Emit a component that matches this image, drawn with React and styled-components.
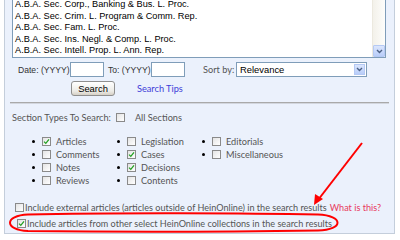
import React from "react";
import styled, { createGlobalStyle } from "styled-components";

const GlobalStyle = createGlobalStyle`
  html, body {
    margin: 0;
    padding: 0;
    background: #fff;
  }
`;

const journals = [
  "A.B.A. Sec. Comm. L. Program & Rep.",
  "A.B.A. Sec. Corp., Banking & Bus. L. Proc.",
  "A.B.A. Sec. Crim. L. Program & Comm. Rep.",
  "A.B.A. Sec. Fam. L. Proc.",
  "A.B.A. Sec. Ins. Negl. & Comp. L. Proc.",
  "A.B.A. Sec. Intell. Prop. L. Ann. Rep.",
];

const columns = [
  [
    { label: "Articles", checked: true },
    { label: "Comments" },
    { label: "Notes" },
    { label: "Reviews" },
  ],
  [
    { label: "Legislation" },
    { label: "Cases", checked: true },
    { label: "Decisions", checked: true },
    { label: "Contents" },
  ],
  [{ label: "Editorials" }, { label: "Miscellaneous" }],
];

const Check = ({ checked }) => (
  <Box>
    {checked && (
      <svg width="7" height="7" viewBox="0 0 7 7">
        <path d="M1 3.6 L2.8 5.4 L6 1.4" fill="none" stroke="#22a022" strokeWidth="1.3" />
      </svg>
    )}
  </Box>
);

const Chevron = () => (
  <svg width="7" height="5" viewBox="0 0 7 5">
    <path d="M1 1 L3.5 3.5 L6 1" fill="none" stroke="#4d6185" strokeWidth="1.4" />
  </svg>
);

const App = () => {
  return (
    <Page>
      <GlobalStyle />
      <Panel>
        <ListBox>
          <Rows>
            {journals.map((j) => (
              <Row key={j}>{j}</Row>
            ))}
          </Rows>
          <Scrollbar>
            <ScrollButton>
              <Chevron />
            </ScrollButton>
          </Scrollbar>
        </ListBox>

        <FormRow $top={4}>
          <FieldLabel $w={52}>Date: (YYYY)</FieldLabel>
          <TextInput />
          <FieldLabel $w={47} $pad={4}>To: (YYYY)</FieldLabel>
          <TextInput />
          <FieldLabel $w={51} $pad={18} $sans>
            Sort by:
          </FieldLabel>
          <Select>
            <span>Relevance</span>
            <SelectButton>
              <Chevron />
            </SelectButton>
          </Select>
        </FormRow>

        <FormRow $top={4}>
          <Button>Search</Button>
          <TipsLink>Search Tips</TipsLink>
        </FormRow>

        <Divider />

        <SectionRow>
          <span>Section Types To Search:</span>
          <Check />
          <span>All Sections</span>
        </SectionRow>

        <Columns>
          {columns.map((col, i) => (
            <Column key={i}>
              {col.map((item) => (
                <Item key={item.label}>
                  <Bullet />
                  <Check checked={item.checked} />
                  <span>{item.label}</span>
                </Item>
              ))}
            </Column>
          ))}
        </Columns>

        <IncludeRow $top={14} $left={10}>
          <Check />
          <span>
            Include external articles (articles outside of HeinOnline) in the search results
          </span>
          <WhatLink>What is this?</WhatLink>
        </IncludeRow>
        <IncludeRow $top={4} $left={12}>
          <Check checked />
          <span>Include articles from other select HeinOnline collections in the search results</span>
        </IncludeRow>
      </Panel>

      <Annotation width="400" height="240" viewBox="0 0 400 240">
        <path
          d="M28 214.5 C110 212.5 250 213 318 214.5 C344 215.5 344 230 318 230.5 C250 231.5 110 232 28 231 C4 230 4 215.5 28 214.5 Z"
          fill="none"
          stroke="#f00"
          strokeWidth="2"
        />
        <line x1="362" y1="143" x2="318" y2="200" stroke="#f00" strokeWidth="2" />
        <polygon points="314,205 315,194 323,199" fill="#f00" />
      </Annotation>
    </Page>
  );
};

export default App;

const Page = styled.div`
  position: relative;
  width: 400px;
  height: 240px;
  overflow: hidden;
  padding: 0 5px 0 4px;
  box-sizing: border-box;
`;

const Panel = styled.div`
  margin-top: -14px;
  height: 248px;
  box-sizing: border-box;
  background: #ebf1fc;
  border: 1px solid #c4cedb;
  border-top: none;
  display: flex;
  flex-direction: column;
`;

const ListBox = styled.div`
  margin-left: 7px;
  width: 374px;
  height: 72px;
  box-sizing: border-box;
  background: #fff;
  border: 1px solid #7f9db9;
  display: flex;
  overflow: hidden;
`;

const Rows = styled.div`
  flex: 1;
  display: flex;
  flex-direction: column;
  justify-content: flex-end;
  padding-left: 2px;
  font-family: "Liberation Sans", Arial, sans-serif;
  font-size: 9.2px;
  color: #000;
`;

const Row = styled.div`
  line-height: 11.6px;
  white-space: nowrap;
`;

const Scrollbar = styled.div`
  width: 12px;
  display: flex;
  flex-direction: column;
  justify-content: flex-end;
  background: linear-gradient(90deg, #f3f1ea, #fdfdfb);
  border-left: 1px solid #ece9df;
`;

const ScrollButton = styled.div`
  height: 10px;
  display: flex;
  align-items: center;
  justify-content: center;
  background: linear-gradient(180deg, #dbe6fd, #b8cdf9);
  border: 1px solid #b5c9f4;
  border-radius: 1px;
`;

const FormRow = styled.div`
  display: flex;
  align-items: center;
  height: 15px;
  margin-top: ${(p) => p.$top}px;
  padding-left: 13px;
`;

const FieldLabel = styled.span`
  width: ${(p) => p.$w}px;
  padding-left: ${(p) => p.$pad || 0}px;
  box-sizing: border-box;
  font-family: ${(p) => (p.$sans ? '"Lato", sans-serif' : '"Liberation Sans", Arial, sans-serif')};
  font-size: ${(p) => (p.$sans ? "9.2px" : "8.6px")};
  color: ${(p) => (p.$sans ? "#555" : "#333")};
  white-space: nowrap;
`;

const TextInput = styled.div`
  width: 34px;
  height: 15px;
  box-sizing: border-box;
  background: #fff;
  border: 1px solid #7f9db9;
`;

const Select = styled.div`
  width: 131px;
  height: 15px;
  box-sizing: border-box;
  background: #fff;
  border: 1px solid #7f9db9;
  display: flex;
  align-items: center;
  justify-content: space-between;
  padding: 0 1px 0 3px;
  font-family: "Liberation Sans", Arial, sans-serif;
  font-size: 9.4px;
  color: #000;
`;

const SelectButton = styled.div`
  width: 11px;
  height: 11px;
  box-sizing: border-box;
  display: flex;
  align-items: center;
  justify-content: center;
  background: linear-gradient(180deg, #dbe6fd, #b8cdf9);
  border: 1px solid #b5c9f4;
`;

const Button = styled.div`
  margin-left: 53px;
  width: 44px;
  height: 15px;
  box-sizing: border-box;
  display: flex;
  align-items: center;
  justify-content: center;
  background: linear-gradient(180deg, #ffffff, #ecebe6 70%, #d6d0c5);
  border: 1px solid #8f8f8f;
  border-radius: 3px;
  font-family: "Liberation Sans", Arial, sans-serif;
  font-size: 9.4px;
  color: #000;
`;

const TipsLink = styled.span`
  margin-left: 22px;
  font-family: "Lato", sans-serif;
  font-size: 9.2px;
  color: #3d3dd8;
`;

const Divider = styled.div`
  margin: 6px 5px 0 5px;
  height: 1px;
  background: #a9a9a9;
  border-bottom: 1px solid #d2d6de;
`;

const SectionRow = styled.div`
  display: flex;
  align-items: center;
  gap: 5px;
  height: 12px;
  margin-top: 7px;
  padding-left: 7px;
  font-family: "Lato", sans-serif;
  font-size: 9.2px;
  color: #555;
`;

const Columns = styled.div`
  display: grid;
  grid-template-columns: 85px 85px 1fr;
  margin-top: 12px;
  padding-left: 27px;
`;

const Column = styled.div`
  display: flex;
  flex-direction: column;
`;

const Item = styled.div`
  display: flex;
  align-items: center;
  height: 13px;
  font-family: "Lato", sans-serif;
  font-size: 9.2px;
  color: #555;
`;

const Bullet = styled.span`
  width: 3px;
  height: 3px;
  border-radius: 50%;
  background: #000;
  margin-right: 7px;
`;

const Box = styled.span`
  width: 9px;
  height: 9px;
  box-sizing: border-box;
  flex-shrink: 0;
  display: inline-flex;
  align-items: center;
  justify-content: center;
  background: linear-gradient(135deg, #e4e4e4, #fff);
  border: 1px solid #8a8a8a;
  margin-right: 5px;
`;

const IncludeRow = styled.div`
  display: flex;
  align-items: center;
  height: 12px;
  margin-top: ${(p) => p.$top}px;
  padding-left: ${(p) => p.$left}px;
  font-family: "Lato", sans-serif;
  font-size: 9.1px;
  color: #555;
  white-space: nowrap;

  ${Box} {
    margin-right: 1px;
  }
`;

const WhatLink = styled.span`
  margin-left: 3px;
  color: #e83a5c;
`;

const Annotation = styled.svg`
  position: absolute;
  left: 0;
  top: 0;
  pointer-events: none;
`;
